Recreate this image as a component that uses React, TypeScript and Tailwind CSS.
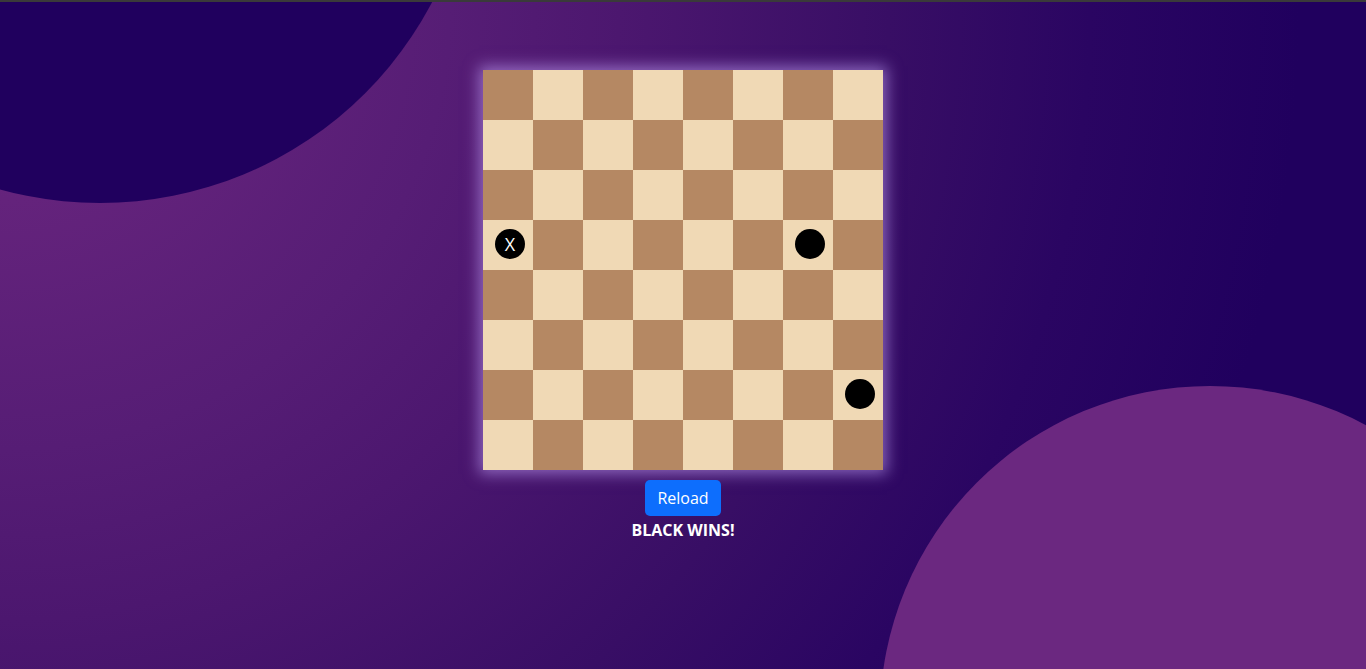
import React from "react";

const pieces: Record<string, { label?: string }> = {
  "3-0": { label: "X" },
  "3-6": {},
  "6-7": {},
};

export default function App() {
  const squares = [];
  for (let r = 0; r < 8; r++) {
    for (let c = 0; c < 8; c++) {
      const dark = (r + c) % 2 === 0;
      const p = pieces[`${r}-${c}`];
      squares.push(
        <div
          key={`${r}-${c}`}
          className={`flex h-[50px] w-[50px] items-start justify-start pl-[12px] pt-[9px] ${
            dark ? "bg-[#b58863]" : "bg-[#f0d9b5]"
          }`}
        >
          {p && (
            <div className="flex h-[30px] w-[30px] items-center justify-center rounded-full bg-black text-[18px] leading-none text-white">
              {p.label ?? ""}
            </div>
          )}
        </div>
      );
    }
  }

  return (
    <div
      className="relative h-[669px] w-full overflow-hidden bg-[radial-gradient(circle_at_0_0,#6e2884_0px,#64237c_200px,#561d75_450px,#4c176f_620px,#380e65_890px,#2a0562_1090px,#20005e_1300px)]"
      style={{ fontFamily: '"Segoe UI", "Open Sans", "Noto Sans", sans-serif' }}
    >
      <div className="absolute left-[-275px] top-[-547px] h-[750px] w-[750px] rounded-full bg-[#20005e]" />
      <div className="absolute left-[880px] top-[386px] h-[660px] w-[660px] rounded-full bg-[#6b2880]" />
      <div className="relative h-[2px] w-full bg-[#3a3a3a]" />
      <div className="relative flex flex-col items-center pt-[68px]">
        <div className="grid w-[400px] grid-cols-8 shadow-[0_0_14px_4px_rgba(200,170,255,0.55)]">
          {squares}
        </div>
        <button className="mt-[10px] h-[36px] rounded-[5px] bg-[#0d6efd] px-[12px] text-[16px] leading-[36px] text-white">
          Reload
        </button>
        <div className="mt-[3px] text-[16px] font-bold leading-[22px] text-white">BLACK WINS!</div>
      </div>
    </div>
  );
}
